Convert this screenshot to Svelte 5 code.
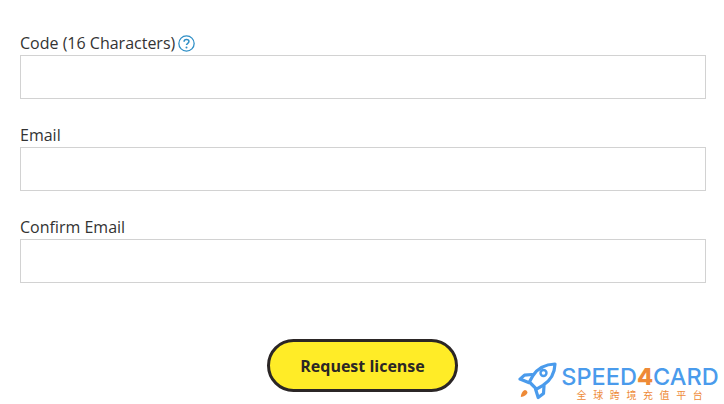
<script>
  const fields = [
    { label: 'Code (16 Characters)', help: true },
    { label: 'Email', help: false },
    { label: 'Confirm Email', help: false }
  ];
</script>

<main class="page">
  <form class="form" onsubmit={(e) => e.preventDefault()}>
    {#each fields as f}
      <div class="field">
        <label class="label">
          <span class="label-row">
            <span>{f.label}</span>
            {#if f.help}
              <svg class="help" viewBox="0 0 16 16" width="17" height="17" aria-hidden="true">
                <circle cx="8" cy="8" r="7.2" fill="none" stroke="#2f8fc6" stroke-width="1.2" />
                <path d="M5.7 6.300c0-1.300 1-2.100 2.300-2.100s2.300.8 2.300 1.900c0 1.700-2.300 1.700-2.300 3.400" fill="none" stroke="#2f8fc6" stroke-width="1.4" />
                <circle cx="8" cy="11.700" r=".95" fill="#2f8fc6" />
              </svg>
            {/if}
          </span>
          <input class="input" type="text" />
        </label>
      </div>
    {/each}
    <div class="actions">
      <button class="btn" type="submit">Request license</button>
    </div>
  </form>

  <div class="logo">
    <svg class="rocket" viewBox="0 0 40 40" width="40" height="40" aria-hidden="true">
      <g fill="none" stroke="#4a9bec" stroke-width="3.200" stroke-linejoin="round" stroke-linecap="round">
        <path d="M37 3c-9.500 .3-17 3.900-22 11.500l-3.600 6.500 7.100 7.100 6.500-3.700c7.800-5 11.700-12.500 12-21.400z" />
        <path d="M14 13.500l-7.500.6-4.500 4 8.500 3.400" />
        <path d="M26 25l-.5 7.500-5.300 4-2.700-8.500" />
      </g>
      <circle cx="25.500" cy="12" r="3" fill="none" stroke="#4a9bec" stroke-width="2.400" />
      <path d="M6.800 29c1.300 0 2.700 1.300 2.700 2.700-.8 2.300-3.200 3.900-6.700 4.300 .1-3.200 1.600-6 4-7z" fill="#ee8a37" />
    </svg>
    <div class="brand">
      <div class="name">SPEED<span class="four">4</span>CARD</div>
      <div class="sub">全球跨境充值平台</div>
    </div>
  </div>
</main>

<style>
  :global(body) {
    margin: 0;
    background: #fff;
  }
  .page {
    position: relative;
    width: 724px;
    height: 404px;
    overflow: hidden;
    font-family: "Open Sans", "Noto Sans", sans-serif;
    color: #333;
  }
  .form {
    display: flex;
    flex-direction: column;
    padding: 32px 18px 0 20px;
  }
  .field {
    margin-bottom: 25px;
  }
  .label {
    display: block;
  }
  .label-row {
    display: flex;
    align-items: center;
    gap: 3px;
    height: 22px;
    margin-bottom: 1px;
    font-size: 16px;
    line-height: 22px;
  }
  .help {
    display: block;
  }
  .input {
    display: block;
    box-sizing: border-box;
    width: 100%;
    height: 44px;
    margin: 0;
    padding: 0 10px;
    border: 1px solid #d2d2d2;
    border-radius: 0;
    background: #fff;
    outline: none;
  }
  .actions {
    display: flex;
    justify-content: flex-start;
    margin: 31px 0 0 247px;
  }
  .btn {
    box-sizing: border-box;
    width: 191px;
    height: 53px;
    border: 3px solid #2b2626;
    border-radius: 27px;
    background: #ffec27;
    color: #2b2626;
    font-family: "Open Sans", "Noto Sans", sans-serif;
    font-size: 16px;
    font-weight: 700;
    cursor: pointer;
  }
  .logo {
    position: absolute;
    left: 518px;
    top: 361px;
    display: flex;
    align-items: flex-start;
    gap: 2px;
  }
  .rocket {
    display: block;
  }
  .brand {
    display: flex;
    flex-direction: column;
    align-items: center;
    width: 160px;
    padding-top: 3px;
  }
  .name {
    font-family: "Inter", "Liberation Sans", sans-serif;
    font-size: 23.500px;
    line-height: 26px;
    font-weight: 500;
    color: #4a9bec;
    white-space: nowrap;
  }
  .four {
    color: #ee8a37;
    font-weight: 800;
  }
  .sub {
    font-family: "Noto Sans CJK SC", sans-serif;
    font-size: 10px;
    line-height: 10px;
    letter-spacing: 6.600px;
    margin-left: 6px;
    color: #ee8a37;
    white-space: nowrap;
  }
</style>
